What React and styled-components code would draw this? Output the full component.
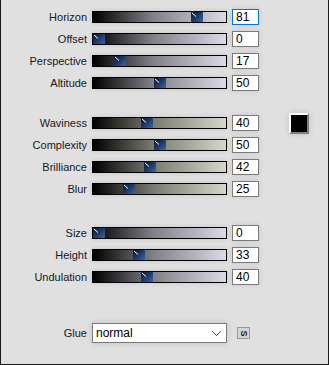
import React from 'react';
import styled, { createGlobalStyle } from 'styled-components';

const Global = createGlobalStyle`
  html, body { margin: 0; padding: 0; background: #e0e0e0; }
  body { font-family: "Liberation Sans", Arial, sans-serif; }
`

const Panel = styled.div`
  box-sizing: border-box;
  width: 329px;
  height: 365px;
  background: #e0e0e0;
  border: 1px solid #1a1a1a;
  border-top: none;
  padding-top: 6px;
  display: flex;
  flex-direction: column;
`

const Group = styled.div`
  display: flex;
  flex-direction: column;
  margin-bottom: ${p => p.gap || 0}px;
`

const Row = styled.div`
  display: grid;
  grid-template-columns: 86px 135px 27px 20px;
  column-gap: 5px;
  align-items: center;
  height: 22px;
  & > :nth-child(4) { margin-left: 25px; }
`

const Label = styled.div`
  text-align: right;
  font-size: 11px;
  color: #121826;
  white-space: nowrap;
`

const Track = styled.div`
  position: relative;
  box-sizing: border-box;
  height: 12px;
  border: 1px solid #000;
  background: ${p => p.tone === 'warm'
    ? 'linear-gradient(to right, #000 0%, #7a7a70 45%, #d6d7c7 100%)'
    : 'linear-gradient(to right, #000 0%, #808088 45%, #d9dae6 100%)'};
  box-shadow: 0 0 5px rgba(0,0,0,0.12);
`

const Thumb = styled.div`
  position: absolute;
  top: 0;
  width: 12px;
  height: 10px;
  background: linear-gradient(135deg, #0e1a30 0%, #1d3560 45%, #3468b0 100%);
  svg { display: block; }
`

const Value = styled.div`
  box-sizing: border-box;
  height: 16px;
  background: #fff;
  border: 1px solid ${p => p.focused ? '#0078d7' : '#7a7a7a'};
  font-size: 12px;
  line-height: 14px;
  padding-left: 3px;
  color: #000;
  box-shadow: 0 0 5px rgba(0,0,0,0.12);
`

const Swatch = styled.div`
  box-sizing: border-box;
  width: 20px;
  height: 21px;
  background: #000;
  border-top: 2px solid #fff;
  border-left: 2px solid #fff;
  border-right: 2px solid #808080;
  border-bottom: 2px solid #808080;
  box-shadow: 0 0 6px rgba(0,0,0,0.15);
`

const GlueRow = styled.div`
  display: grid;
  grid-template-columns: 86px 135px 13px;
  column-gap: 5px;
  align-items: center;
  height: 20px;
  margin-top: 35px;
  & > :nth-child(3) { margin-left: 5px; }
`

const Select = styled.div`
  box-sizing: border-box;
  height: 20px;
  background: #fff;
  border: 1px solid #7a7a7a;
  display: flex;
  align-items: center;
  justify-content: space-between;
  padding: 0 4px 0 3px;
  font-size: 12px;
  color: #000;
  box-shadow: 0 0 6px rgba(0,0,0,0.15);
`

const SmallButton = styled.div`
  box-sizing: border-box;
  width: 13px;
  height: 12px;
  background: #d4d4d4;
  border: 1px solid #9a9a9a;
  display: flex;
  align-items: center;
  justify-content: center;
  font-size: 9px;
  font-weight: bold;
  color: #222;
  span { display: inline-block; transform: rotate(90deg); line-height: 1; }
`

const groups = [
  { tone: 'cool', gap: 18, rows: [['Horizon', 81], ['Offset', 0], ['Perspective', 17], ['Altitude', 50]] },
  { tone: 'warm', gap: 22, rows: [['Waviness', 40], ['Complexity', 50], ['Brilliance', 42], ['Blur', 25]] },
  { tone: 'cool', gap: 0, rows: [['Size', 0], ['Height', 33], ['Undulation', 40]] },
]

const Slider = ({ value, tone }) => (
  <Track tone={tone}>
    <Thumb style={{ left: Math.round(value / 100 * (133 - 12)) }}>
      <svg width="12" height="10" viewBox="0 0 12 10">
        <line x1="1" y1="1" x2="5" y2="4.5" stroke="#fff" strokeWidth="1" />
      </svg>
    </Thumb>
  </Track>
)

export default function App() {
  return (
    <>
      <Global />
      <Panel>
        {groups.map((g, gi) => (
          <Group key={gi} gap={g.gap}>
            {g.rows.map(([name, value], ri) => (
              <Row key={name}>
                <Label>{name}</Label>
                <Slider value={value} tone={g.tone} />
                <Value focused={gi === 0 && ri === 0}>{value}</Value>
                {gi === 1 && ri === 0 ? <Swatch /> : <span />}
              </Row>
            ))}
          </Group>
        ))}
        <GlueRow>
          <Label>Glue</Label>
          <Select>
            <span>normal</span>
            <svg width="11" height="7" viewBox="0 0 11 7">
              <polyline points="1,1 5.5,5.5 10,1" fill="none" stroke="#555" strokeWidth="1" />
            </svg>
          </Select>
          <SmallButton><span>S</span></SmallButton>
        </GlueRow>
      </Panel>
    </>
  )
}
